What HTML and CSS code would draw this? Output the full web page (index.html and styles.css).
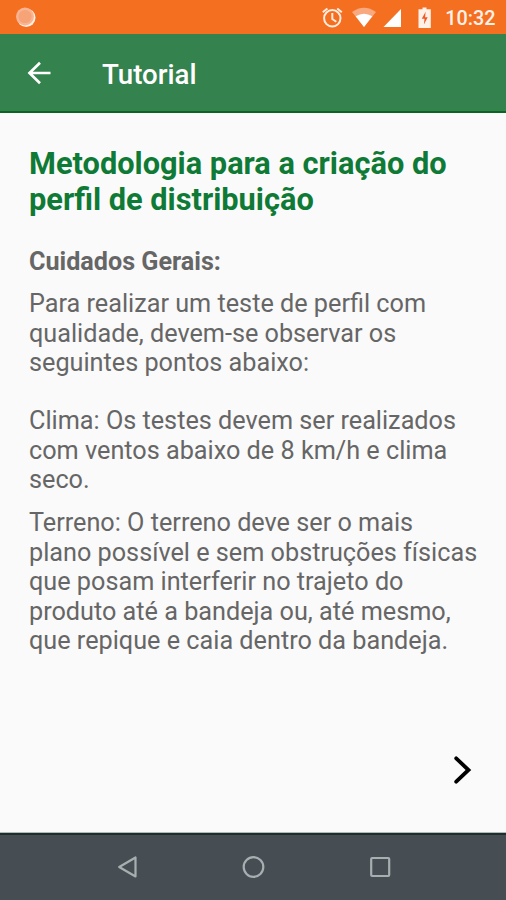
FILE: index.html
```html
<!DOCTYPE html>
<html lang="pt-BR">
<head>
<meta charset="utf-8">
<title>Tutorial</title>
<link rel="stylesheet" href="styles.css">
</head>
<body>
<div class="screen">
  <div class="status">
    <svg class="status-icons" width="506" height="34" viewBox="0 0 506 34" aria-hidden="true">
      <circle cx="26.200" cy="17.700" r="9.300" fill="#fff0e6"/>
      <circle cx="25" cy="16.500" r="9" fill="#f9b593"/>
      <circle cx="25" cy="16.500" r="6.600" fill="#f6a378"/>
      <g fill="none" stroke="#ffece0" stroke-width="2">
        <circle cx="332.3" cy="18.3" r="8.2"/>
        <path d="M332.3 13v6l4 2.8M322.8 12.2l4.6-3.8M337.2 8.4l4.6 3.8"/>
      </g>
      <path d="M352 12q12-8.500 24 0L364 27z" fill="#f9a980"/>
      <path d="M355.700 16.200q8.300-5 16.600 0L364 27z" fill="#fff"/>
      <path d="M383.500 27L401 9v18z" fill="#fff"/>
      <path d="M418.500 9.200h4v-1.700h4v1.700h4.300V28h-12.300z" fill="#fff0e8"/>
      <path d="M425.600 11.800l-3.800 7h2.700l-.6 5.700 3.800-7.200h-2.600z" fill="#ed5b25"/>
    </svg>
    <span class="clock">10:32</span>
  </div>
  <header class="appbar">
    <svg class="back" width="24" height="24" viewBox="0 0 24 24"><path d="M23.500 12H2.500M13 1.800L2.500 12 13 22.200" fill="none" stroke="#fff" stroke-width="2.700"/></svg>
    <span class="title">Tutorial</span>
  </header>
  <main class="content">
    <h1>Metodologia para a criação do<br>perfil de distribuição</h1>
    <h2>Cuidados Gerais:</h2>
    <p class="intro">Para realizar um teste de perfil com<br>qualidade, devem-se observar os<br>seguintes pontos abaixo:</p>
    <p>Clima: Os testes devem ser realizados<br>com ventos abaixo de 8 km/h e clima<br>seco.</p>
    <p>Terreno: O terreno deve ser o mais<br>plano possível e sem obstruções físicas<br>que posam interferir no trajeto do<br>produto até a bandeja ou, até mesmo,<br>que repique e caia dentro da bandeja.</p>
    <svg class="next" width="20" height="30" viewBox="0 0 20 30"><path d="M3.200 3.300L15.500 15 3.200 26.700" fill="none" stroke="#000" stroke-width="3.800" stroke-linecap="round"/></svg>
  </main>
  <nav class="navbar">
    <svg width="24" height="24" viewBox="0 0 24 24"><path d="M20.500 2.500v19L4.200 12z"/></svg>
    <svg width="24" height="24" viewBox="0 0 24 24"><circle cx="12.500" cy="12" r="9.800"/></svg>
    <svg width="24" height="24" viewBox="0 0 24 24"><rect x="3.200" y="3" width="18" height="18" rx="1"/></svg>
  </nav>
</div>
</body>
</html>
```
FILE: styles.css
```css
* { box-sizing: border-box; }
body { margin: 0; font-family: Roboto, sans-serif; background: #fafafa; }
.screen { width: 506px; height: 900px; display: flex; flex-direction: column; overflow: hidden; }
.status { height: 34.400px; flex: none; background: #f56f21; display: grid; }
.status-icons, .clock { grid-area: 1 / 1; }
.clock { justify-self: end; margin-right: 10.500px; line-height: 37px; font-size: 19.800px; font-weight: 500; color: #fff0e8; }
.appbar { height: 78.600px; flex: none; background: #34824d; border-bottom: 2px solid #0c6424; display: flex; align-items: center; padding-left: 27px; }
.title { margin-left: 51px; padding-top: 3px; font-size: 27.700px; font-weight: 500; color: #fff; }
.content { flex: 1; display: flex; flex-direction: column; padding: 33px 0 0 29px; color: #666; white-space: nowrap; }
h1, h2, p { margin: 0; }
h1 { font-size: 30.760px; line-height: 36px; font-weight: 700; color: #0f7a36; margin-bottom: 28.600px; }
h2 { font-size: 25.150px; line-height: 29.600px; font-weight: 700; margin-bottom: 13.300px; }
p { font-size: 25.220px; line-height: 29.500px; margin-bottom: 13.200px; }
.intro { margin-bottom: 28.400px; }
.next { align-self: flex-end; margin: auto 33px 48px 0; }
.navbar { height: 67px; flex: none; background: #464e54; border-top: 2px solid #19302c; display: flex; align-items: center; justify-content: center; gap: 102.500px; padding-bottom: 2px; box-shadow: 0 -1px 0 #b5b8b7; }
.navbar svg { fill: none; stroke: #a9aeb0; stroke-width: 2.200; stroke-linejoin: round; }
```
